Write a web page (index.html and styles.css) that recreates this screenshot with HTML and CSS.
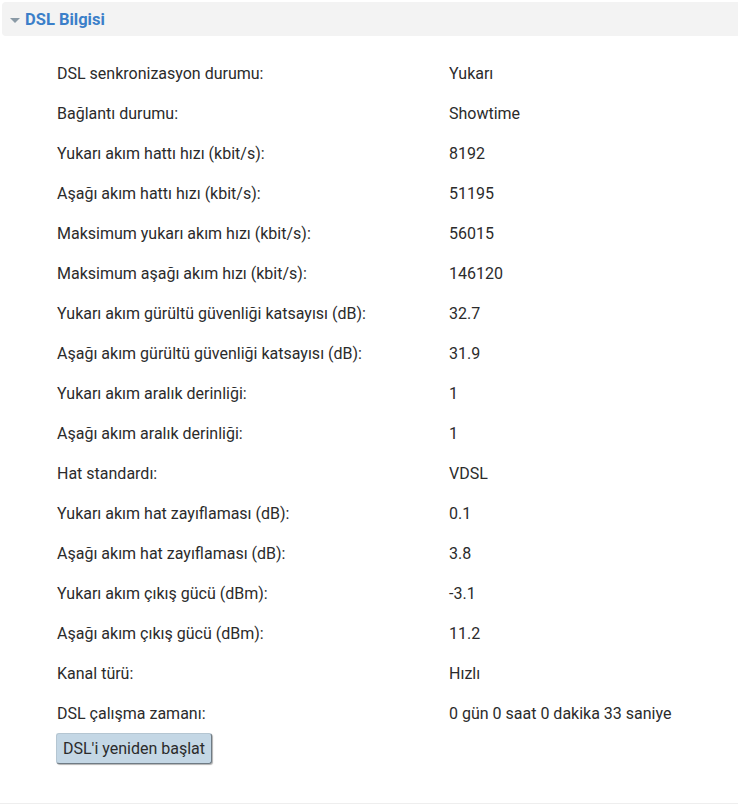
FILE: index.html
```html
<!DOCTYPE html>
<html lang="tr">
<head>
    <meta charset="UTF-8">
    <meta name="viewport" content="width=device-width, initial-scale=1.0">
    <title>DSL Bilgisi</title>
    <link rel="stylesheet" href="styles.css">
</head>
<body>
    <div class="panel">
        <div class="panel-header">
            <span class="arrow"></span>
            <h2>DSL Bilgisi</h2>
        </div>
        <div class="panel-body">
            <div class="info-row"><span class="label">DSL senkronizasyon durumu:</span><span class="value">Yukarı</span></div>
            <div class="info-row"><span class="label">Bağlantı durumu:</span><span class="value">Showtime</span></div>
            <div class="info-row"><span class="label">Yukarı akım hattı hızı (kbit/s):</span><span class="value">8192</span></div>
            <div class="info-row"><span class="label">Aşağı akım hattı hızı (kbit/s):</span><span class="value">51195</span></div>
            <div class="info-row"><span class="label">Maksimum yukarı akım hızı (kbit/s):</span><span class="value">56015</span></div>
            <div class="info-row"><span class="label">Maksimum aşağı akım hızı (kbit/s):</span><span class="value">146120</span></div>
            <div class="info-row"><span class="label">Yukarı akım gürültü güvenliği katsayısı (dB):</span><span class="value">32.7</span></div>
            <div class="info-row"><span class="label">Aşağı akım gürültü güvenliği katsayısı (dB):</span><span class="value">31.9</span></div>
            <div class="info-row"><span class="label">Yukarı akım aralık derinliği:</span><span class="value">1</span></div>
            <div class="info-row"><span class="label">Aşağı akım aralık derinliği:</span><span class="value">1</span></div>
            <div class="info-row"><span class="label">Hat standardı:</span><span class="value">VDSL</span></div>
            <div class="info-row"><span class="label">Yukarı akım hat zayıflaması (dB):</span><span class="value">0.1</span></div>
            <div class="info-row"><span class="label">Aşağı akım hat zayıflaması (dB):</span><span class="value">3.8</span></div>
            <div class="info-row"><span class="label">Yukarı akım çıkış gücü (dBm):</span><span class="value">-3.1</span></div>
            <div class="info-row"><span class="label">Aşağı akım çıkış gücü (dBm):</span><span class="value">11.2</span></div>
            <div class="info-row"><span class="label">Kanal türü:</span><span class="value">Hızlı</span></div>
            <div class="info-row"><span class="label">DSL çalışma zamanı:</span><span class="value">0 gün 0 saat 0 dakika 33 saniye</span></div>
            <button type="button" class="restart-button">DSL'i yeniden başlat</button>
        </div>
    </div>
    <div class="panel-footer"></div>
</body>
</html>
```

FILE: styles.css
```css
body {
    margin: 0;
    padding: 0;
    font-family: Roboto, 'Noto Sans', sans-serif;
    background-color: #fff;
    color: #2b2b2b;
    width: 738px;
    height: 807px;
    overflow: hidden;
}

.panel {
    padding-top: 2px;
    padding-left: 2px;
}

.panel-header {
    display: flex;
    align-items: center;
    height: 34px;
    background-color: #f3f3f3;
    border-radius: 4px 0 0 4px;
    padding-left: 8px;
}

.arrow {
    width: 0;
    height: 0;
    border-left: 5px solid transparent;
    border-right: 5px solid transparent;
    border-top: 5px solid #8a9aa6;
    margin-right: 5px;
    margin-top: 2px;
}

h2 {
    margin: 0;
    font-size: 16.5px;
    font-weight: bold;
    color: #3b7fc9;
}

.panel-body {
    padding: 17px 0 0 55px;
}

.info-row {
    display: flex;
    height: 40px;
    align-items: center;
    font-size: 16px;
}

.label {
    width: 392px;
}

.restart-button {
    margin-left: -1px;
    height: 31px;
    padding: 0 6px;
    font-family: Roboto, 'Noto Sans', sans-serif;
    font-size: 16px;
    color: #2b2b2b;
    background-color: #c4d7e5;
    border: 1px solid #b5c6d2;
    border-right-color: #6f7b84;
    border-bottom-color: #6f7b84;
    border-radius: 3px;
    box-shadow: 1px 1px 1px rgba(0,0,0,0.3);
    cursor: pointer;
}

.panel-footer {
    position: absolute;
    left: 0;
    right: 0;
    top: 803px;
    height: 1px;
    background-color: #eee;
}
```
